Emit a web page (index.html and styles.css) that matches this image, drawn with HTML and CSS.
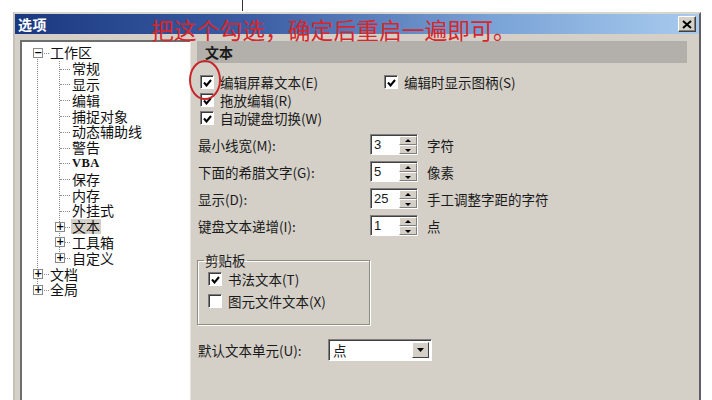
FILE: index.html
```html
<!DOCTYPE html>
<html lang="zh-CN">
<head>
<meta charset="utf-8">
<title>选项</title>
<link rel="stylesheet" href="styles.css">
</head>
<body>
<div class="topline"><span class="vline"></span></div>
<div class="dialog">
  <div class="titlebar">
    <span class="title">选项</span>
    <span class="close"><svg width="10" height="9" viewBox="0 0 10 9"><path d="M1 1 L9 8 M9 1 L1 8" stroke="#000" stroke-width="2"/></svg></span>
  </div>
  <div class="body">
    <div class="treepanel">
      <ul class="tree">
        <li>
          <div class="row top"><span class="box">−</span><span class="lbl">工作区</span></div>
          <ul class="sub">
            <li><div class="row leaf"><span class="lbl">常规</span></div></li>
            <li><div class="row leaf"><span class="lbl">显示</span></div></li>
            <li><div class="row leaf"><span class="lbl">编辑</span></div></li>
            <li><div class="row leaf"><span class="lbl">捕捉对象</span></div></li>
            <li><div class="row leaf"><span class="lbl">动态辅助线</span></div></li>
            <li><div class="row leaf"><span class="lbl">警告</span></div></li>
            <li><div class="row leaf"><span class="lbl lat">VBA</span></div></li>
            <li><div class="row leaf"><span class="lbl">保存</span></div></li>
            <li><div class="row leaf"><span class="lbl">内存</span></div></li>
            <li><div class="row leaf"><span class="lbl">外挂式</span></div></li>
            <li><div class="row node"><span class="box">+</span><span class="lbl sel">文本</span></div></li>
            <li><div class="row node"><span class="box">+</span><span class="lbl">工具箱</span></div></li>
            <li><div class="row node"><span class="box">+</span><span class="lbl">自定义</span></div></li>
          </ul>
        </li>
        <li><div class="row top"><span class="box">+</span><span class="lbl">文档</span></div></li>
        <li><div class="row top"><span class="box">+</span><span class="lbl">全局</span></div></li>
      </ul>
    </div>
    <div class="page">
      <div class="pagehead">文本</div>
      <div class="checks">
        <label class="chk"><span class="cb on"><svg width="9" height="8" viewBox="0 0 9 8"><path d="M1 3.5 L3.5 6.5 L8 1" fill="none" stroke="#000" stroke-width="2"/></svg></span>编辑屏幕文本(E)</label>
        <label class="chk"><span class="cb on"><svg width="9" height="8" viewBox="0 0 9 8"><path d="M1 3.5 L3.5 6.5 L8 1" fill="none" stroke="#000" stroke-width="2"/></svg></span>编辑时显示图柄(S)</label>
        <label class="chk"><span class="cb on"><svg width="9" height="8" viewBox="0 0 9 8"><path d="M1 3.5 L3.5 6.5 L8 1" fill="none" stroke="#000" stroke-width="2"/></svg></span>拖放编辑(R)</label>
        <span></span>
        <label class="chk"><span class="cb on"><svg width="9" height="8" viewBox="0 0 9 8"><path d="M1 3.5 L3.5 6.5 L8 1" fill="none" stroke="#000" stroke-width="2"/></svg></span>自动键盘切换(W)</label>
        <span></span>
      </div>
      <div class="fields">
        <span class="flabel">最小线宽(M):</span>
        <span class="spin"><span class="val">3</span><span class="arrows"><span class="up"></span><span class="dn"></span></span></span>
        <span class="unit">字符</span>
        <span class="flabel">下面的希腊文字(G):</span>
        <span class="spin"><span class="val">5</span><span class="arrows"><span class="up"></span><span class="dn"></span></span></span>
        <span class="unit">像素</span>
        <span class="flabel">显示(D):</span>
        <span class="spin"><span class="val">25</span><span class="arrows"><span class="up"></span><span class="dn"></span></span></span>
        <span class="unit">手工调整字距的字符</span>
        <span class="flabel">键盘文本递增(I):</span>
        <span class="spin"><span class="val">1</span><span class="arrows"><span class="up"></span><span class="dn"></span></span></span>
        <span class="unit">点</span>
      </div>
      <fieldset class="group">
        <legend>剪贴板</legend>
        <label class="chk grow"><span class="cb on"><svg width="9" height="8" viewBox="0 0 9 8"><path d="M1 3.5 L3.5 6.5 L8 1" fill="none" stroke="#000" stroke-width="2"/></svg></span>书法文本(T)</label>
        <label class="chk grow"><span class="cb"></span>图元文件文本(X)</label>
      </fieldset>
      <div class="unitrow">
        <span class="ulabel">默认文本单元(U):</span>
        <span class="combo"><span class="cval">点</span><span class="cbtn"><svg width="7" height="4" viewBox="0 0 7 4"><path d="M0 0 H7 L3.5 4 Z" fill="#000"/></svg></span></span>
      </div>
    </div>
  </div>
  <div class="note">把这个勾选，确定后重启一遍即可。</div>
  <div class="circle"></div>
</div>
</body>
</html>
```

FILE: styles.css
```css
* { box-sizing: border-box; }
html, body { margin: 0; padding: 0; background: #fff; }
body {
  width: 712px; height: 400px; overflow: hidden;
  font-family: "Noto Sans CJK SC", "Liberation Sans", sans-serif;
  font-size: 13.5px; color: #1a1a1a;
}
.topline { height: 12px; }
.vline { display: block; margin-left: 242px; width: 1px; height: 11px; background: #333; }

.dialog {
  position: relative;
  margin-left: 13px; width: 688px; height: 388px;
  background: #d4d0c8;
  border-left: 2px solid #c4c0b8;
  border-top: 2px solid #d8d5ce;
  border-right: 2px solid #5f5e66;
}
.titlebar {
  height: 20px;
  background: linear-gradient(to right, #1a3880 0%, #3c5ea4 35%, #7aa3d6 70%, #a8cbee 100%);
  display: flex; align-items: center; justify-content: space-between;
  padding: 0 3px 0 3px;
}
.title { color: #fff; font-weight: 700; font-size: 14px; letter-spacing: 0.5px; }
.close {
  width: 18px; height: 16px; background: #d4d0c8;
  border: 1px solid; border-color: #fff #404040 #404040 #fff;
  box-shadow: inset -1px -1px #808080;
  display: flex; align-items: center; justify-content: center;
}

.body { display: flex; gap: 6px; padding: 6px 12px 0 5px; }

.treepanel {
  width: 171px; height: 362px; background: #fff;
  border-top: 2px solid #6e6e6e; border-left: 2px solid #6e6e6e;
  border-right: 1px solid #e8e6e2; border-bottom: 1px solid #e8e6e2;
  padding-top: 3px;
  font-size: 14px;
}
.tree, .sub { list-style: none; margin: 0; padding: 0; position: relative; }
.tree::before {
  content: ""; position: absolute; left: 15px; top: 8px; bottom: 8px;
  border-left: 1px dotted #8a8a8a;
}
.sub::before {
  content: ""; position: absolute; left: 37px; top: 0; bottom: 8px;
  border-left: 1px dotted #8a8a8a;
}
.row { position: relative; height: 15.8px; display: flex; align-items: center; }
.row::before {
  content: ""; position: absolute; top: 50%; border-top: 1px dotted #8a8a8a;
}
.row.top { padding-left: 11px; }
.row.top::before { left: 20px; width: 7px; }
.row.top .lbl { margin-left: 6px; }
.row.leaf { padding-left: 49px; }
.row.leaf::before { left: 38px; width: 10px; }
.row.node { padding-left: 33px; }
.row.node::before { left: 42px; width: 6px; }
.row.node .lbl { margin-left: 6px; }
.box {
  position: relative; z-index: 1;
  width: 10px; height: 10px; border: 1px solid #8a8a8a; background: #fff;
  font-size: 10px; line-height: 7px; text-align: center; color: #000;
  font-family: "DejaVu Sans", sans-serif; font-weight: 700;
}
.lbl { line-height: 15px; padding: 0 1px; color: #111; }
.lbl.lat { font-family: "Liberation Serif", serif; font-size: 12.5px; font-weight: 700; letter-spacing: 0.5px; }
.lbl.sel { background: #d4d0c8; }

.page { width: 490px; }
.pagehead {
  margin-top: 1px; height: 22px; background: #b3b0ab;
  font-weight: 700; font-size: 14px; padding-left: 8px;
  display: flex; align-items: center;
}
.checks {
  display: grid; grid-template-columns: 184px auto;
  margin-top: 10px; padding-left: 3px;
}
.chk { display: flex; align-items: center; height: 18px; }
.cb {
  width: 14px; height: 14px; background: #fff; margin-right: 6px;
  border: 1px solid; border-color: #7c7c7c #fff #fff #7c7c7c;
  box-shadow: inset 1px 1px #3a3a3a;
  display: flex; align-items: center; justify-content: center; padding: 1px 0 0 1px;
}

.fields {
  display: grid; grid-template-columns: 172px 48px auto;
  grid-auto-rows: 27px; align-items: center;
  margin-top: 4px; padding-left: 1px;
}
.unit { margin-left: 9px; }
.spin {
  height: 21px; display: flex; background: #fff;
  border: 1px solid; border-color: #808080 #fff #fff #808080;
  box-shadow: inset 1px 1px #404040;
}
.val { flex: 1; padding-left: 3px; line-height: 19px; font-family: "Liberation Sans", sans-serif; font-size: 13px; }
.arrows { width: 18px; display: flex; flex-direction: column; padding: 1px 0 0 0; }
.arrows span {
  flex: 1; background: #d4d0c8; position: relative;
  border: 1px solid; border-color: #fff #808080 #808080 #fff;
}
.arrows .up::after, .arrows .dn::after {
  content: ""; position: absolute; left: 50%; top: 50%; margin-left: -3px;
  border-left: 3px solid transparent; border-right: 3px solid transparent;
}
.arrows .up::after { border-bottom: 3px solid #000; margin-top: -2px; }
.arrows .dn::after { border-top: 3px solid #000; margin-top: -1px; }

.group {
  width: 173px; margin: 13px 0 0 0;
  border: 1px solid #8f8c86; box-shadow: inset 1px 1px #fff, 1px 1px #fff;
  padding: 0 0 12px 10px;
}
.group legend { padding: 0 1px; margin-left: -4px; line-height: 16px; }
.grow { height: 22px; }

.unitrow { display: flex; align-items: center; margin-top: 14px; padding-left: 1px; }
.ulabel { width: 130px; }
.combo {
  width: 104px; height: 22px; background: #fff; display: flex;
  border: 1px solid; border-color: #808080 #fff #fff #808080;
  box-shadow: inset 1px 1px #404040;
}
.cval { flex: 1; padding-left: 4px; line-height: 20px; }
.cbtn {
  width: 17px; margin: 2px 2px 2px 0; background: #d4d0c8;
  border: 1px solid; border-color: #fff #404040 #404040 #fff;
  display: flex; align-items: center; justify-content: center;
}

.note {
  position: absolute; left: 136px; top: 1px;
  color: #d8262b; font-size: 22.8px; line-height: 30px; white-space: nowrap;
}
.circle {
  position: absolute; left: 174px; top: 46px; width: 32px; height: 40px;
  border: 2px solid #c9262b; border-radius: 50%;
}
```
